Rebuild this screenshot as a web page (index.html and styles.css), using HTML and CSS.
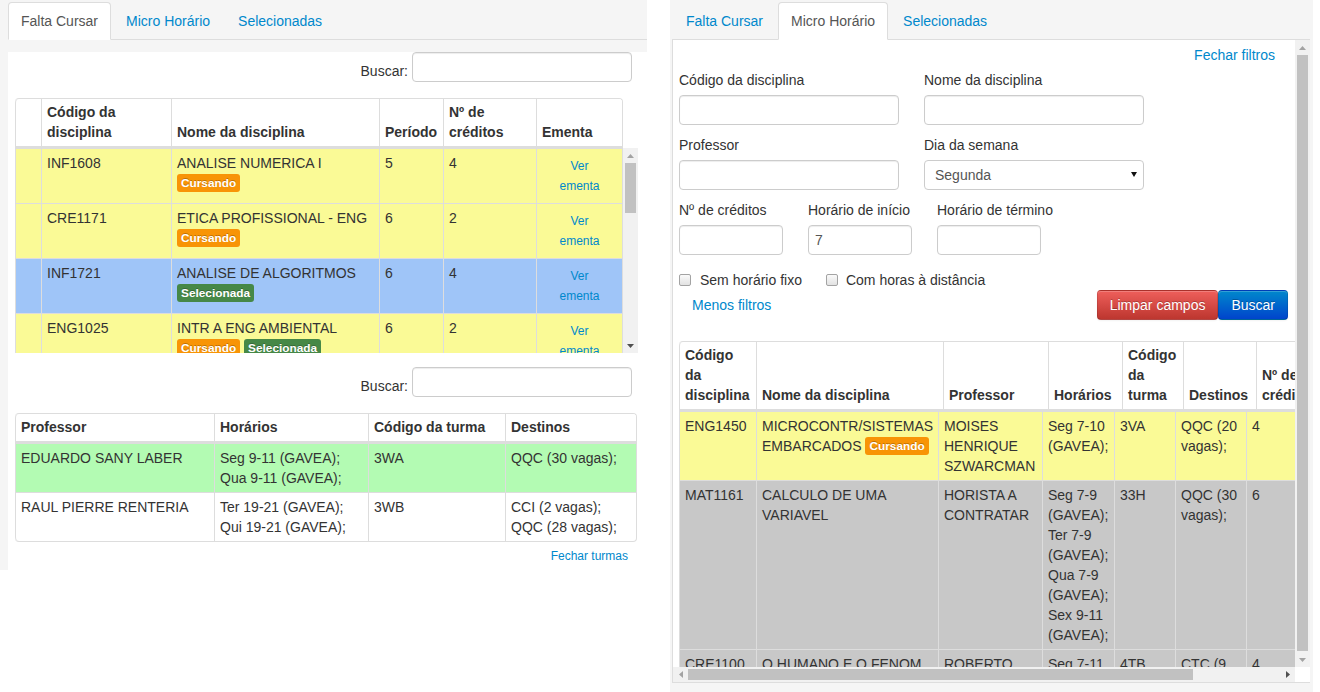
FILE: index.html
```html
<!DOCTYPE html>
<html lang="pt-BR">
<head>
<meta charset="utf-8">
<title>Micro Horário</title>
<link rel="stylesheet" href="styles.css">
</head>
<body>
<div class="page">

  <section class="panel panel-left">
    <ul class="tabs">
      <li class="tab active">Falta Cursar</li>
      <li class="tab"><a href="#">Micro Horário</a></li>
      <li class="tab"><a href="#">Selecionadas</a></li>
    </ul>
    <div class="pane pane-left">
      <div class="search search-top"><label class="search-label">Buscar:</label><input class="input" type="text"></div>

      <div class="dt-head">
        <table class="grid grid-head w608">
          <tr>
            <th class="c-a"></th>
            <th class="c-b">Código da<br>disciplina</th>
            <th class="c-c">Nome da disciplina</th>
            <th class="c-d">Período</th>
            <th class="c-e">Nº de<br>créditos</th>
            <th class="c-f">Ementa</th>
          </tr>
        </table>
      </div>
      <div class="dt-scroll">
        <div class="dt-viewport">
          <table class="grid grid-body w608">
            <tr class="row-yellow">
              <td class="c-a"></td><td class="c-b">INF1608</td>
              <td class="c-c">ANALISE NUMERICA I<br><span class="tag tag-warning">Cursando</span></td>
              <td class="c-d">5</td><td class="c-e">4</td>
              <td class="c-f cell-center"><a class="btn-link-sm" href="#">Ver<br>ementa</a></td>
            </tr>
            <tr class="row-yellow">
              <td></td><td>CRE1171</td>
              <td>ETICA PROFISSIONAL - ENG<br><span class="tag tag-warning">Cursando</span></td>
              <td>6</td><td>2</td>
              <td class="cell-center"><a class="btn-link-sm" href="#">Ver<br>ementa</a></td>
            </tr>
            <tr class="row-blue">
              <td></td><td>INF1721</td>
              <td>ANALISE DE ALGORITMOS<br><span class="tag tag-success">Selecionada</span></td>
              <td>6</td><td>4</td>
              <td class="cell-center"><a class="btn-link-sm" href="#">Ver<br>ementa</a></td>
            </tr>
            <tr class="row-yellow">
              <td></td><td>ENG1025</td>
              <td>INTR A ENG AMBIENTAL<br><span class="tag tag-warning">Cursando</span> <span class="tag tag-success">Selecionada</span></td>
              <td>6</td><td>2</td>
              <td class="cell-center"><a class="btn-link-sm" href="#">Ver<br>ementa</a></td>
            </tr>
          </table>
        </div>
        <div class="vbar">
          <span class="sb-btn"><svg class="arrow" width="7" height="4" viewBox="0 0 7 4"><polygon class="arr-off" points="0,4 7,4 3.5,0"/></svg></span>
          <span class="sb-track"><span class="sb-thumb thumb-left"></span></span>
          <span class="sb-btn"><svg class="arrow" width="7" height="4" viewBox="0 0 7 4"><polygon class="arr-on" points="0,0 7,0 3.5,4"/></svg></span>
        </div>
      </div>

      <div class="search search-mid"><label class="search-label">Buscar:</label><input class="input" type="text"></div>

      <div class="dt-classes">
        <table class="grid grid-head w622">
          <tr>
            <th class="t-a">Professor</th>
            <th class="t-b">Horários</th>
            <th class="t-c">Código da turma</th>
            <th class="t-d">Destinos</th>
          </tr>
        </table>
        <table class="grid grid-body grid-bottom w622">
          <tr class="row-green">
            <td class="t-a">EDUARDO SANY LABER</td>
            <td class="t-b">Seg 9-11 (GAVEA);<br>Qua 9-11 (GAVEA);</td>
            <td class="t-c">3WA</td>
            <td class="t-d">QQC (30 vagas);</td>
          </tr>
          <tr>
            <td>RAUL PIERRE RENTERIA</td>
            <td>Ter 19-21 (GAVEA);<br>Qui 19-21 (GAVEA);</td>
            <td>3WB</td>
            <td>CCI (2 vagas);<br>QQC (28 vagas);</td>
          </tr>
        </table>
      </div>
      <div class="close-turmas"><a href="#">Fechar turmas</a></div>
    </div>
  </section>

  <section class="panel panel-right">
    <ul class="tabs tabs-right">
      <li class="tab"><a href="#">Falta Cursar</a></li>
      <li class="tab active">Micro Horário</li>
      <li class="tab"><a href="#">Selecionadas</a></li>
    </ul>
    <div class="pane pane-right">
      <div class="mh-viewport">
        <div class="mh-close"><a href="#">Fechar filtros</a></div>
        <div class="filters">
          <div class="frow">
            <div class="field"><label class="flabel">Código da disciplina</label><input class="input" type="text"></div>
            <div class="field"><label class="flabel">Nome da disciplina</label><input class="input" type="text"></div>
          </div>
          <div class="frow">
            <div class="field"><label class="flabel">Professor</label><input class="input" type="text"></div>
            <div class="field"><label class="flabel">Dia da semana</label>
              <div class="select-wrap">
                <select class="input select"><option>Segunda</option><option>Terça</option><option>Quarta</option></select>
                <svg class="select-arrow" width="6" height="5" viewBox="0 0 6 5"><polygon points="0,0 6,0 3,5"/></svg>
              </div>
            </div>
          </div>
          <div class="frow">
            <div class="field"><label class="flabel">Nº de créditos</label><input class="input input-small" type="text"></div>
            <div class="field"><label class="flabel">Horário de início</label><input class="input input-small" type="text" value="7"></div>
            <div class="field"><label class="flabel">Horário de término</label><input class="input input-small" type="text"></div>
          </div>
          <div class="checks">
            <label class="check"><input class="cb" type="checkbox">Sem horário fixo</label>
            <label class="check check-second"><input class="cb" type="checkbox">Com horas à distância</label>
          </div>
          <div class="actions">
            <a class="link-more" href="#">Menos filtros</a>
            <div class="btns">
              <button class="btn btn-danger" type="button">Limpar campos</button>
              <button class="btn btn-primary" type="button">Buscar</button>
            </div>
          </div>
        </div>

        <div class="dt-fixed">
          <table class="grid grid-head w716">
            <tr>
              <th class="h1">Código<br>da<br>disciplina</th>
              <th class="h2">Nome da disciplina</th>
              <th class="h3">Professor</th>
              <th class="h4">Horários</th>
              <th class="h5">Código<br>da<br>turma</th>
              <th class="h6">Destinos</th>
              <th class="h7">Nº de<br>créditos</th>
              <th class="h8">Ementa</th>
            </tr>
          </table>
          <table class="grid grid-body w716">
            <tr class="row-yellow">
              <td class="b1">ENG1450</td>
              <td class="b2">MICROCONTR/SISTEMAS<br>EMBARCADOS <span class="tag tag-warning">Cursando</span></td>
              <td class="b3">MOISES<br>HENRIQUE<br>SZWARCMAN</td>
              <td class="b4">Seg 7-10<br>(GAVEA);</td>
              <td class="b5">3VA</td>
              <td class="b6">QQC (20<br>vagas);</td>
              <td class="b7">4</td>
              <td class="b8"><a class="btn-link-sm" href="#">Ver<br>ementa</a></td>
            </tr>
            <tr class="row-grey">
              <td>MAT1161</td>
              <td>CALCULO DE UMA<br>VARIAVEL</td>
              <td>HORISTA A<br>CONTRATAR</td>
              <td>Seg 7-9<br>(GAVEA);<br>Ter 7-9<br>(GAVEA);<br>Qua 7-9<br>(GAVEA);<br>Sex 9-11<br>(GAVEA);</td>
              <td>33H</td>
              <td>QQC (30<br>vagas);</td>
              <td>6</td>
              <td><a class="btn-link-sm" href="#">Ver<br>ementa</a></td>
            </tr>
            <tr class="row-grey">
              <td>CRE1100</td>
              <td>O HUMANO E O FENOM</td>
              <td>ROBERTO</td>
              <td>Seg 7-11</td>
              <td>4TB</td>
              <td>CTC (9</td>
              <td>4</td>
              <td></td>
            </tr>
          </table>
        </div>
      </div>

      <div class="vbar">
        <span class="sb-btn"><svg class="arrow" width="7" height="4" viewBox="0 0 7 4"><polygon class="arr-off" points="0,4 7,4 3.5,0"/></svg></span>
        <span class="sb-track"><span class="sb-thumb thumb-full"></span></span>
        <span class="sb-btn"><svg class="arrow" width="7" height="4" viewBox="0 0 7 4"><polygon class="arr-off" points="0,0 7,0 3.5,4"/></svg></span>
      </div>
      <div class="hbar">
        <span class="sb-btn"><svg class="arrow" width="4" height="7" viewBox="0 0 4 7"><polygon class="arr-off" points="4,0 4,7 0,3.5"/></svg></span>
        <span class="sb-track sb-track-h"><span class="sb-thumb thumb-h"></span></span>
        <span class="sb-btn"><svg class="arrow" width="4" height="7" viewBox="0 0 4 7"><polygon class="arr-on" points="0,0 0,7 4,3.5"/></svg></span>
      </div>
      <div class="sb-corner"></div>
    </div>
  </section>

</div>
</body>
</html>
```

FILE: styles.css
```css
* { box-sizing: border-box; }

body {
  margin: 0;
  background: #fff;
  color: #333;
  font-family: "Liberation Sans", Arial, Helvetica, sans-serif;
  font-size: 14px;
  line-height: 20px;
}

a { color: #0088cc; text-decoration: none; }

.page { display: flex; align-items: flex-start; }

.panel { background: #f5f5f5; }
.panel-left { width: 647px; height: 570px; padding: 2px 0 0 8px; margin-right: 23px; }
.panel-right { width: 643px; height: 692px; padding: 2px 3px 0 2px; }

/* tabs */
.tabs {
  display: flex;
  align-items: flex-start;
  list-style: none;
  margin: 0;
  padding: 0;
  border-bottom: 1px solid #ddd;
}
.tabs-right { padding-left: 1px; }
.tab {
  margin: 0 2px -1px 0;
  padding: 8px 12px;
  border: 1px solid transparent;
  border-radius: 4px 4px 0 0;
  line-height: 20px;
  color: #0088cc;
}
.tab a { color: inherit; }
.tab.active {
  color: #555;
  background: #fff;
  border-color: #ddd #ddd transparent;
}

/* panes */
.pane { background: #fff; }
.pane-left { height: 530px; padding: 0 9px 0 7px; }
.pane-right {
  display: grid;
  grid-template-columns: 622px 15px;
  grid-template-rows: 627px 15px;
  width: 638px;
  height: 643px;
  border-left: 1px solid #ddd;
  border-bottom: 1px solid #ddd;
}
.mh-viewport {
  overflow: hidden;
  padding: 5px 7px 3px 6px;
}

/* fake classic scrollbars */
.vbar, .hbar {
  display: flex;
  background: #f1f1f1;
}
.vbar { flex-direction: column; width: 15px; }
.hbar { flex-direction: row; height: 15px; }
.sb-btn {
  flex: 0 0 15px;
  display: flex;
  align-items: center;
  justify-content: center;
}
.sb-track {
  flex: 1;
  display: flex;
  flex-direction: column;
  padding: 0 2px;
}
.sb-track-h { flex-direction: row; padding: 2px 0; }
.sb-thumb { display: block; background: #c1c1c1; }
.thumb-left { height: 50px; }
.thumb-full { flex: 1; margin-bottom: 1px; }
.thumb-h { width: 505px; }
.arrow { display: block; }
.arr-on { fill: #505050; }
.arr-off { fill: #a3a3a3; }
.sb-corner { background: #fff; }

/* inputs */
.input {
  display: block;
  width: 220px;
  height: 30px;
  margin: 0;
  padding: 4px 6px;
  border: 1px solid #ccc;
  border-radius: 4px;
  background: #fff;
  box-shadow: inset 0 1px 1px rgba(0, 0, 0, 0.075);
  color: #555;
  font: inherit;
  line-height: 20px;
}
.input-small { width: 104px; }
.select-wrap { position: relative; width: 220px; margin-bottom: 10px; }
.select {
  -webkit-appearance: none;
  appearance: none;
  padding: 4px 20px 4px 10px;
  box-shadow: none;
}
.select-arrow {
  position: absolute;
  top: 12px;
  right: 7px;
  fill: #111;
}

/* datatables search */
.search {
  display: flex;
  justify-content: flex-end;
  align-items: flex-end;
  padding-right: 6px;
}
.search-top { margin-top: 12px; }
.search-mid { margin-top: 14px; }
.search-label { margin: 0 4px 1px 0; }

/* grids */
.grid {
  border-collapse: separate;
  border-spacing: 0;
  table-layout: fixed;
  border-right: 1px solid #ddd;
}
.grid th, .grid td {
  border-left: 1px solid #ddd;
  padding: 4px 5px;
  text-align: left;
  vertical-align: top;
  white-space: nowrap;
  overflow: hidden;
}
.grid-head { border-top: 1px solid #ddd; border-radius: 4px 4px 0 0; }
.grid-head th {
  padding: 3px 5px 4px;
  vertical-align: bottom;
  font-weight: bold;
  border-bottom: 2px solid #ddd;
  background: #fff;
}
.grid-head th:first-child { border-top-left-radius: 4px; }
.grid-head th:last-child { border-top-right-radius: 3px; }
.grid-body { border-top: 1px solid #ddd; }
.grid-body tr + tr td { border-top: 1px solid #ddd; }
.grid-bottom { border-bottom: 1px solid #ddd; border-radius: 0 0 4px 4px; }
.grid-bottom tr:last-child td:first-child { border-bottom-left-radius: 4px; }
.grid-bottom tr:last-child td:last-child { border-bottom-right-radius: 3px; }

.w608 { width: 608px; }
.w622 { width: 622px; }
.w716 { width: 716px; }

.c-a { width: 26px; }
.c-b { width: 130px; }
.c-c { width: 208px; }
.c-d { width: 64px; }
.c-e { width: 93px; }
.c-f { width: 86px; }

.t-a { width: 199px; }
.t-b { width: 154px; }
.t-c { width: 137px; }
.t-d { width: 131px; }

.h1 { width: 77px; }
.h2 { width: 187px; }
.h3 { width: 105px; }
.h4 { width: 74px; }
.h5 { width: 61px; }
.h6 { width: 73px; }
.h7 { width: 70px; }
.h8 { width: 68px; }

.b1 { width: 77px; }
.b2 { width: 182px; }
.b3 { width: 104px; }
.b4 { width: 72px; }
.b5 { width: 61px; }
.b6 { width: 71px; }
.b7 { width: 80px; }
.b8 { width: 68px; }

.row-yellow td { background: #fafa96; }
.row-blue td { background: #9fc5f8; }
.row-green td { background: #b3fbb3; }
.row-grey td { background: #c8c8c8; }

.cell-center { text-align: center !important; }

.btn-link-sm {
  display: inline-block;
  padding: 2px 10px;
  border: 1px solid transparent;
  font-size: 12px;
  line-height: 20px;
  color: #0088cc;
}

/* labels */
.tag {
  display: inline-block;
  padding: 2px 4px;
  border-radius: 3px;
  font-size: 11.844px;
  font-weight: bold;
  line-height: 14px;
  color: #fff;
  white-space: nowrap;
  vertical-align: 1px;
  text-shadow: 0 -1px 0 rgba(0, 0, 0, 0.25);
}
.tag-warning { background: #f89406; }
.tag-success { background: #468847; }

/* left tables layout */
.dt-head { margin-top: 16px; width: 608px; }
.dt-scroll {
  display: flex;
  width: 623px;
  height: 205px;
}
.dt-viewport { width: 608px; overflow: hidden; }
.dt-classes { margin-top: 16px; }
.close-turmas {
  margin-top: 4px;
  padding-right: 10px;
  text-align: right;
  font-size: 12px;
  line-height: 20px;
}

/* right pane */
.mh-close { display: flex; justify-content: flex-end; }
.mh-close a { margin-right: 13px; }
.filters { margin-top: 5px; }
.frow { display: flex; gap: 25px; }
.field { display: flex; flex-direction: column; }
.flabel { display: block; margin-bottom: 5px; }
.field .input { margin-bottom: 10px; }
.field .select { margin-bottom: 0; }

.checks { display: flex; align-items: center; height: 20px; margin-top: 5px; }
.check { display: flex; align-items: center; }
.check-second { margin-left: 24px; }
.cb {
  -webkit-appearance: none;
  appearance: none;
  width: 12px;
  height: 12px;
  margin: 0 9px 0 0;
  border: 1px solid #a3a3a3;
  border-radius: 2px;
  background: linear-gradient(#fafafa, #e2e2e2);
}
.check-second .cb { margin-right: 8px; }

.actions {
  display: flex;
  justify-content: space-between;
  align-items: center;
  height: 30px;
}
.link-more { padding-left: 13px; }
.btns { display: flex; }
.btn {
  height: 30px;
  margin: 0;
  padding: 4px 12px;
  border: 1px solid;
  border-color: rgba(0, 0, 0, 0.1) rgba(0, 0, 0, 0.1) rgba(0, 0, 0, 0.25);
  border-radius: 4px;
  color: #fff;
  font: inherit;
  line-height: 20px;
  text-shadow: 0 -1px 0 rgba(0, 0, 0, 0.25);
  box-shadow: inset 0 1px 0 rgba(255, 255, 255, 0.2), 0 1px 2px rgba(0, 0, 0, 0.05);
}
.btn-danger { background: #da4f49 linear-gradient(#ee5f5b, #bd362f); }
.btn-primary { background: #006dcc linear-gradient(#0088cc, #0044cc); }

.dt-fixed {
  width: max-content;
  height: 326px;
  margin-top: 21px;
  overflow: hidden;
}
```
